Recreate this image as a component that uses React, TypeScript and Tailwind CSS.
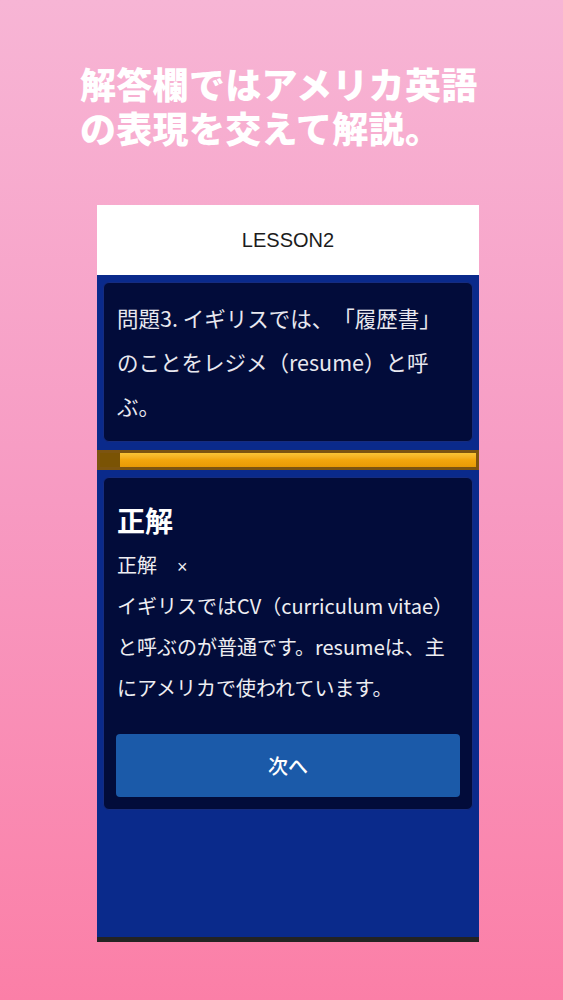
export default function App() {
  const jp = { fontFamily: '"Noto Sans CJK JP", "Noto Sans", sans-serif' };
  return (
    <div
      className="h-[1000px] w-full overflow-hidden bg-gradient-to-b from-[#f7b5d5] via-[#f79ac2] to-[#fb7fa7] [text-spacing-trim:space-all]"
      style={jp}
    >
      {/* headline */}
      <h1 className="pl-[80px] pt-[61px] text-[36px] font-black leading-[44px] tracking-[0.3px] text-white">
        解答欄ではアメリカ英語
        <br />
        の表現を交えて解説。
      </h1>

      {/* phone screen */}
      <div className="ml-[97px] mt-[56px] flex h-[737px] w-[382px] flex-col">
        <div className="flex h-[70px] items-center justify-center bg-white">
          <span
            className="text-[20px] text-[#1c1c1c]"
            style={{ fontFamily: '"Liberation Sans", Arial, sans-serif' }}
          >
            LESSON2
          </span>
        </div>

        <div className="flex flex-1 flex-col bg-[#0a2a8b] pt-[7px]">
          {/* question */}
          <div className="mx-[6px] h-[160px] rounded-[6px] border border-[#152c80] bg-[#020c3a] px-[13px] pt-[13px] text-[21.5px] leading-[44px] text-[#e8e8ef]">
            問題3. イギリスでは、「履歴書」
            <br />
            のことをレジメ（resume）と呼
            <br />
            ぶ。
          </div>

          {/* timer bar */}
          <div className="mt-[8px] flex h-[20px] border-[3px] border-[#7c5410] bg-gradient-to-b from-[#f9c436] via-[#f2a60c] to-[#e89a06]">
            <div className="h-full w-[20px] bg-[#7a5304]" />
          </div>

          {/* answer */}
          <div className="mx-[6px] mt-[7px] rounded-[6px] border border-[#152c80] bg-[#020c3a] px-[12px] pb-[12px] pt-[22px]">
            <div className="px-[1px] text-[28px] font-bold leading-[40px] text-white">
              正解
            </div>
            <div className="mt-[4px] px-[1px] text-[20px] leading-[41px] text-[#eeeef2]">
              {"正解\u3000"}
              <span
                style={{ fontFamily: '"Liberation Sans", Arial, sans-serif' }}
                className="text-[18px] leading-none"
              >
                ×
              </span>
              <br />
              イギリスではCV（curriculum vitae）
              <br />
              と呼ぶのが普通です。resumeは、主
              <br />
              にアメリカで使われています。
            </div>
            <button className="mt-[26px] flex h-[63px] w-full items-center justify-center rounded-[4px] bg-[#1b5aa9] text-[20px] font-medium text-white">
              次へ
            </button>
          </div>
        </div>

        <div className="h-[5px] bg-[#232323]" />
      </div>
    </div>
  );
}
